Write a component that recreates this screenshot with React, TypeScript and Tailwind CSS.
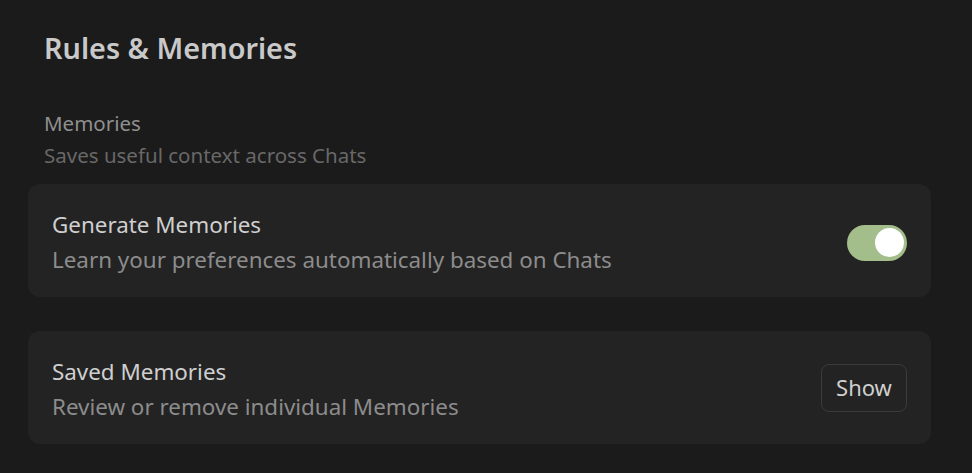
import React from 'react';

function Toggle({ on }: { on: boolean }) {
  return (
    <button
      className={`mt-[4px] w-[60px] h-[36px] rounded-full flex items-center px-[3px] ${on ? 'bg-[#a3bd8b] justify-end' : 'bg-[#3a3a3a] justify-start'}`}
    >
      <span className="w-[29px] h-[29px] rounded-full bg-white block" />
    </button>
  );
}

function SettingRow({ title, desc, children }: { title: string; desc: string; children: React.ReactNode }) {
  return (
    <div className="bg-[#232323] rounded-[12px] h-[113px] pl-[24px] pr-[24px] flex items-center justify-between">
      <div className="flex flex-col pt-[2px]">
        <span className="text-[22.4px] leading-[35px] text-[#cfcfcf]">{title}</span>
        <span className="text-[22.4px] leading-[35px] text-[#8c8c8c]">{desc}</span>
      </div>
      {children}
    </div>
  );
}

export default function App() {
  return (
    <div
      className="w-[972px] h-[473px] bg-[#1b1b1b] overflow-hidden"
      style={{ fontFamily: "'Noto Sans', 'Open Sans', sans-serif" }}
    >
      <div className="pl-[28px] pr-[41px] pt-[28px]">
        <h1 className="pl-[16px] text-[28.8px] leading-[40px] font-semibold text-[#c9c9c9]">Rules &amp; Memories</h1>

        <div className="pl-[16px] mt-[39px] flex flex-col">
          <span className="text-[20.5px] leading-[32px] text-[#8f8f8f]">Memories</span>
          <span className="text-[20.5px] leading-[32px] text-[#686868]">Saves useful context across Chats</span>
        </div>

        <div className="mt-[13px] flex flex-col gap-[34px]">
          <SettingRow title="Generate Memories" desc="Learn your preferences automatically based on Chats">
            <Toggle on />
          </SettingRow>
          <SettingRow title="Saved Memories" desc="Review or remove individual Memories">
            <button className="h-[48px] w-[86px] rounded-[8px] border border-[#3b3b3b] text-[22px] text-[#cfcfcf] flex items-center justify-center">
              Show
            </button>
          </SettingRow>
        </div>
      </div>
    </div>
  );
}
